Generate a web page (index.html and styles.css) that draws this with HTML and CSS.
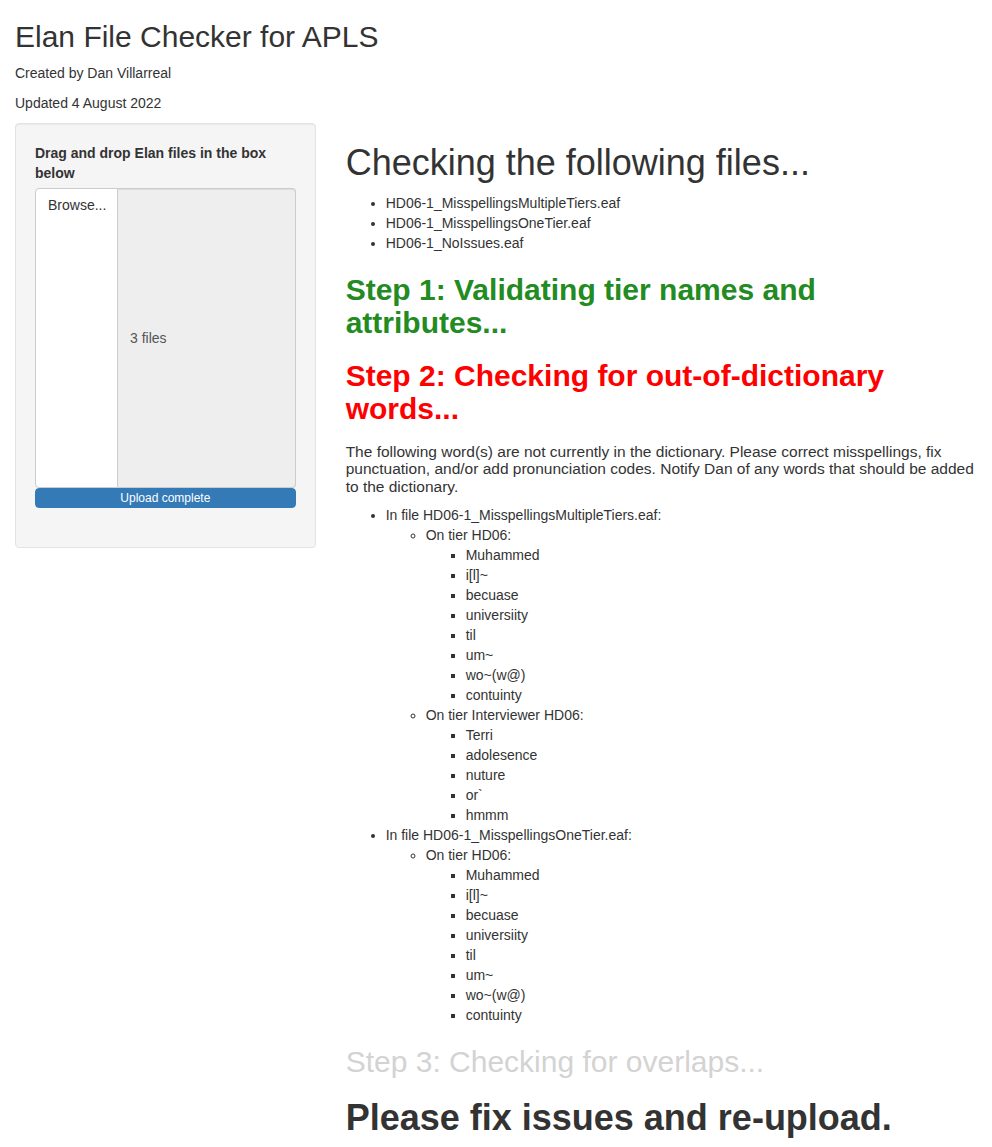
FILE: index.html
```html
<!DOCTYPE html>
<html lang="en">
<head>
<meta charset="utf-8">
<title>Elan File Checker for APLS</title>
<link rel="stylesheet" href="styles.css">
</head>
<body>
<div class="container">
  <h2 class="title">Elan File Checker for APLS</h2>
  <p class="meta">Created by Dan Villarreal</p>
  <p class="meta">Updated 4 August 2022</p>
  <div class="row">
    <div class="sidebar">
      <div class="well">
        <div class="form-group">
          <label class="control-label">Drag and drop Elan files in the box below</label>
          <div class="input-group">
            <span class="btn-browse">Browse...</span>
            <div class="file-field">3 files</div>
          </div>
          <div class="progress"><div class="progress-bar">Upload complete</div></div>
        </div>
      </div>
    </div>
    <div class="main">
      <h1 class="h1">Checking the following files...</h1>
      <ul class="list">
        <li>HD06-1_MisspellingsMultipleTiers.eaf</li>
        <li>HD06-1_MisspellingsOneTier.eaf</li>
        <li>HD06-1_NoIssues.eaf</li>
      </ul>
      <h2 class="h2 step-ok">Step 1: Validating tier names and attributes...</h2>
      <h2 class="h2 step-fail">Step 2: Checking for out-of-dictionary words...</h2>
      <p class="notice">The following word(s) are not currently in the dictionary. Please correct misspellings, fix punctuation, and/or add pronunciation codes. Notify Dan of any words that should be added to the dictionary.</p>
      <ul class="list">
        <li>In file HD06-1_MisspellingsMultipleTiers.eaf:
          <ul class="sub">
            <li>On tier HD06:
              <ul class="sub">
                <li>Muhammed</li>
                <li>i[l]~</li>
                <li>becuase</li>
                <li>universiity</li>
                <li>til</li>
                <li>um~</li>
                <li>wo~(w@)</li>
                <li>contuinty</li>
              </ul>
            </li>
            <li>On tier Interviewer HD06:
              <ul class="sub">
                <li>Terri</li>
                <li>adolesence</li>
                <li>nuture</li>
                <li>or`</li>
                <li>hmmm</li>
              </ul>
            </li>
          </ul>
        </li>
        <li>In file HD06-1_MisspellingsOneTier.eaf:
          <ul class="sub">
            <li>On tier HD06:
              <ul class="sub">
                <li>Muhammed</li>
                <li>i[l]~</li>
                <li>becuase</li>
                <li>universiity</li>
                <li>til</li>
                <li>um~</li>
                <li>wo~(w@)</li>
                <li>contuinty</li>
              </ul>
            </li>
          </ul>
        </li>
      </ul>
      <h2 class="h2 step-pending">Step 3: Checking for overlaps...</h2>
      <h1 class="h1 final">Please fix issues and re-upload.</h1>
    </div>
  </div>
</div>
</body>
</html>
```
FILE: styles.css
```css
html, body {
  margin: 0;
  padding: 0;
  background: #fff;
}
body {
  font-family: "Liberation Sans", Arial, Helvetica, sans-serif;
  font-size: 14px;
  line-height: 20px;
  color: #333;
}
.container {
  padding: 0 15px;
}
.title {
  font-size: 30px;
  font-weight: 500;
  line-height: 1.1;
  margin: 20px 0 10px;
}
.meta {
  margin: 0 0 10px;
}
.row {
  display: flex;
  margin: 0 -15px;
}
.sidebar {
  width: 33.3333%;
  padding: 0 15px;
  box-sizing: border-box;
}
.main {
  width: 66.6667%;
  padding: 0 15px;
  box-sizing: border-box;
}
.well {
  background: #f5f5f5;
  border: 1px solid #e3e3e3;
  border-radius: 4px;
  box-shadow: inset 0 1px 1px rgba(0, 0, 0, 0.05);
  padding: 19px;
  margin-bottom: 20px;
}
.form-group {
  max-width: 300px;
  margin-bottom: 15px;
}
.control-label {
  display: block;
  font-weight: bold;
  margin-bottom: 5px;
}
.input-group {
  display: flex;
  height: 300px;
  box-sizing: border-box;
}
.btn-browse {
  width: 83px;
  box-sizing: border-box;
  background: #fff;
  border: 1px solid #ccc;
  border-radius: 4px 0 0 4px;
  padding: 6px 12px;
  color: #333;
}
.file-field {
  flex: 1;
  display: flex;
  align-items: center;
  background: #eee;
  border: 1px solid #ccc;
  border-left: 0;
  border-radius: 0 4px 4px 0;
  padding: 6px 12px;
  color: #555;
  box-shadow: inset 0 1px 1px rgba(0, 0, 0, 0.075);
}
.progress {
  height: 20px;
  margin: 0 0 20px;
  border-radius: 4px;
  overflow: hidden;
  background: #f5f5f5;
}
.progress-bar {
  height: 20px;
  background: #337ab7;
  color: #fff;
  font-size: 12px;
  line-height: 20px;
  text-align: center;
  border-radius: 4px;
}
.h1 {
  font-size: 36px;
  font-weight: 500;
  line-height: 1.1;
  margin: 20px 0 10px;
}
.h2 {
  font-size: 30px;
  font-weight: bold;
  line-height: 1.1;
  margin: 20px 0 10px;
}
.step-ok {
  color: #228b22;
}
.step-fail {
  color: #ff0000;
}
.step-pending {
  color: #d3d3d3;
  font-weight: 500;
}
.final {
  font-weight: bold;
}
.list {
  margin: 0 0 10px;
  padding-left: 40px;
}
.sub {
  margin: 0;
  padding-left: 40px;
}
.notice {
  font-size: 15.5px;
  line-height: 17.6px;
  margin: 18px 0 10px;
}
```
